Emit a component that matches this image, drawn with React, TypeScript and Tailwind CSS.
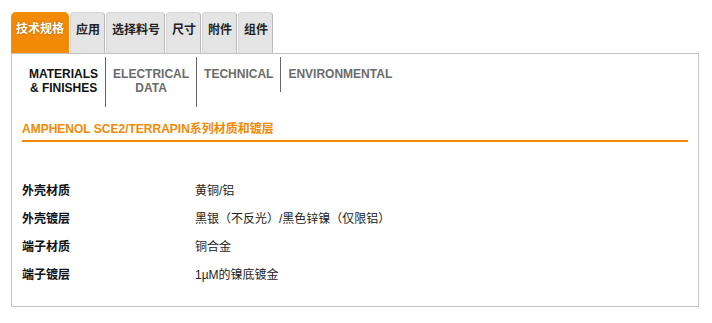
const TABS = ['技术规格', '应用', '选择料号', '尺寸', '附件', '组件']

const SUBTABS = [
  { label: ['MATERIALS', '& FINISHES'], active: true },
  { label: ['ELECTRICAL', 'DATA'], active: false },
  { label: ['TECHNICAL'], active: false },
  { label: ['ENVIRONMENTAL'], active: false },
]

const ROWS = [
  ['外壳材质', '黄铜/铝'],
  ['外壳镀层', '黑银（不反光）/黑色锌镍（仅限铝）'],
  ['端子材质', '铜合金'],
  ['端子镀层', '1µM的镍底镀金'],
]

const font = "font-['Liberation_Sans','Noto_Sans_CJK_SC',sans-serif]"

export default function App() {
  return (
    <div className={`bg-white w-[712px] h-[323px] pt-[12px] pl-[11px] ${font}`}>
      <div className="flex items-end h-[41px]">
        {TABS.map((t, i) =>
          i === 0 ? (
            <div
              key={t}
              className="h-[41px] px-[5px] pt-[7px] rounded-t-[5px] bg-[#f28a05] text-white text-[12px] font-bold leading-[20px] [text-shadow:0_0_2px_rgba(120,60,0,0.6)]"
            >
              {t}
            </div>
          ) : (
            <div
              key={t}
              className="h-[41px] ml-px pl-[5px] pr-[4px] pt-[7px] rounded-t-[4px] bg-[#e4e4e4] border border-b-0 border-[#d6d6d6] border-r-[#b9b9b9] text-[#222] text-[12px] font-bold leading-[20px]"
            >
              {t}
            </div>
          ),
        )}
      </div>

      <div className="w-[688px] h-[254px] border border-[#c4c4c4] px-[10px]">
        <div className="flex items-start mt-[3px]">
          {SUBTABS.map((s, i) => (
            <div
              key={i}
              className={`px-[7px] pt-[10px] text-center text-[12px] font-bold leading-[14px] ${
                i < SUBTABS.length - 1 ? 'border-r border-[#666]' : ''
              } ${s.label.length > 1 ? 'h-[50px]' : 'h-[35px]'} ${s.active ? 'text-[#111]' : 'text-[#6b6b6b]'}`}
            >
              {s.label.map((l) => (
                <div key={l}>{l}</div>
              ))}
            </div>
          ))}
        </div>

        <div className="mt-[15px] text-[#f28a05] text-[12px] font-bold leading-[14px] pb-[4px] border-b-2 border-[#f28a05]">
          AMPHENOL SCE2/TERRAPIN系列材质和镀层
        </div>

        <div className="mt-[35px]">
          {ROWS.map(([k, v]) => (
            <div key={k} className="flex h-[28px] items-center text-[12px] text-[#222]">
              <div className="w-[173px] font-bold text-[#111]">{k}</div>
              <div>{v}</div>
            </div>
          ))}
        </div>
      </div>
    </div>
  )
}
